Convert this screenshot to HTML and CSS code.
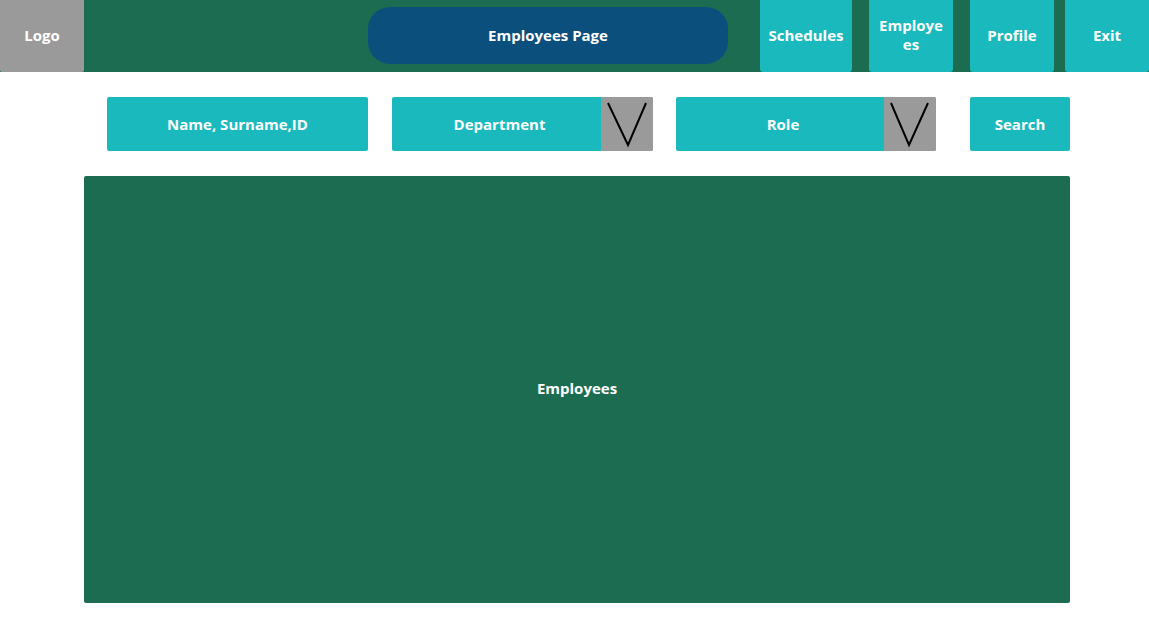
FILE: index.html
```html
<!DOCTYPE html>
<html>
<head>
<meta charset="utf-8">
<link rel="stylesheet" href="styles.css">
</head>
<body>
<header class="topbar">
  <div class="logo">Logo</div>
  <div class="title-pill">Employees Page</div>
  <nav class="nav">
    <div class="nav-btn nav-schedules">Schedules</div>
    <div class="nav-btn nav-employees">Employees</div>
    <div class="nav-btn nav-profile">Profile</div>
    <div class="nav-btn nav-exit">Exit</div>
  </nav>
</header>
<section class="filters">
  <div class="field field-name">Name, Surname,ID</div>
  <div class="field field-select field-dept">
    <span class="field-label">Department</span>
    <span class="chevron"><svg width="52" height="54" viewBox="0 0 52 54"><polyline points="7,6 27,48 45,6" fill="none" stroke="#000" stroke-width="2"/></svg></span>
  </div>
  <div class="field field-select field-role">
    <span class="field-label">Role</span>
    <span class="chevron"><svg width="52" height="54" viewBox="0 0 52 54"><polyline points="7,6 25,48 44,6" fill="none" stroke="#000" stroke-width="2"/></svg></span>
  </div>
  <div class="field field-search">Search</div>
</section>
<main class="panel">Employees</main>
</body>
</html>
```

FILE: styles.css
```css
* { box-sizing: border-box; }
html, body { margin: 0; padding: 0; background: #fff; }
body {
  font-family: "Open Sans", "Liberation Sans", sans-serif;
  font-weight: 700;
  font-size: 15px;
  color: #fff;
  width: 1149px;
  height: 643px;
  overflow: hidden;
}
.topbar {
  display: flex;
  height: 72px;
  background: #1b6c51;
}
.logo {
  width: 84px;
  height: 72px;
  background: #9a9a9a;
  display: flex;
  align-items: center;
  justify-content: center;
  border-radius: 0 0 2px 2px;
  padding-bottom: 2px;
}
.title-pill {
  margin-left: 284px;
  margin-top: 7px;
  width: 360px;
  height: 57px;
  background: #0b4f7d;
  border-radius: 22px;
  display: flex;
  align-items: center;
  justify-content: center;
  padding-bottom: 1px;
}
.nav {
  display: flex;
  margin-left: 32px;
}
.nav-btn {
  height: 72px;
  background: #1ab9bd;
  display: flex;
  align-items: center;
  justify-content: center;
  text-align: center;
  border-radius: 0 0 3px 3px;
  line-height: 19px;
  padding-bottom: 2px;
}
.nav-schedules { width: 92px; }
.nav-employees { width: 84px; margin-left: 17px; padding: 0 8px 2px; word-break: break-all; }
.nav-profile { width: 84px; margin-left: 17px; }
.nav-exit { width: 84px; margin-left: 11px; }
.filters {
  display: flex;
  margin-top: 25px;
  padding-left: 107px;
  height: 54px;
}
.field {
  height: 54px;
  background: #1ab9bd;
  border-radius: 2px;
  display: flex;
  align-items: center;
  justify-content: center;
  padding-bottom: 1px;
}
.field-name { width: 261px; }
.field-dept { width: 261px; margin-left: 24px; }
.field-role { width: 260px; margin-left: 23px; }
.field-search { width: 100px; margin-left: 34px; }
.field-select { justify-content: flex-start; overflow: hidden; padding-bottom: 0; }
.field-label {
  flex: 1;
  text-align: center;
  padding-left: 6px;
  padding-bottom: 1px;
}
.chevron {
  width: 52px;
  height: 54px;
  background: #9a9a9a;
  display: block;
}
.chevron svg { display: block; }
.panel {
  margin-top: 25px;
  margin-left: 84px;
  width: 986px;
  height: 427px;
  background: #1b6c51;
  border-radius: 2px;
  display: flex;
  align-items: center;
  justify-content: center;
  padding-bottom: 3px;
}
```
